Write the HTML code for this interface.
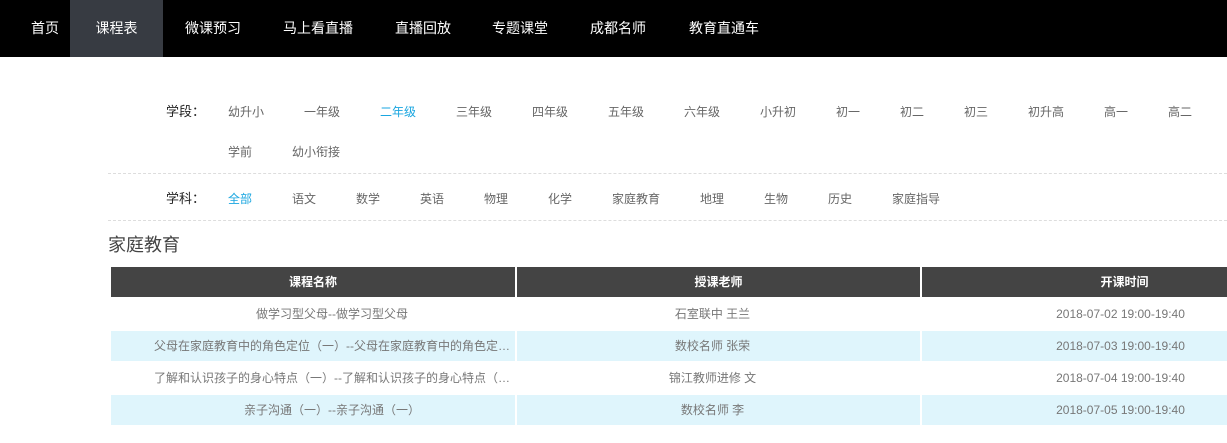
<!DOCTYPE html>
<html><head><meta charset="utf-8"><style>
*{margin:0;padding:0;box-sizing:border-box}
body{width:1227px;height:443px;overflow:hidden;background:#fff;font-family:"Liberation Sans","Noto Sans CJK SC",sans-serif;position:relative}
.nav{position:absolute;left:0;top:0;width:1227px;height:57px;background:#000}
.nav span{position:absolute;top:0;height:57px;line-height:57px;color:#fff;font-size:14px;white-space:nowrap}
.nav .act{background:#373b42;width:93px;left:70px;text-align:center}
.t{position:absolute;font-size:12px;color:#666;white-space:nowrap;line-height:16px}
.lab{color:#222;font-size:13px}
.blue{color:#1aa6e0}
.dash{position:absolute;left:108px;width:1119px;border-top:1px dashed #ddd}
.h{position:absolute;left:108px;top:231px;font-size:18px;color:#444}
.c{position:absolute;height:30px;line-height:30px;text-align:center;font-size:12px;color:#777;white-space:nowrap;overflow:hidden}
.n{padding-left:38px}
.d{padding-left:92px}
.hd{background:#444;color:#fff;font-weight:bold}
.bl{background:#dff5fc}
</style></head><body>
<div class="nav">
<span style="left:31px">首页</span>
<span class="act">课程表</span>
<span style="left:185px">微课预习</span>
<span style="left:283px">马上看直播</span>
<span style="left:395px">直播回放</span>
<span style="left:492px">专题课堂</span>
<span style="left:590px">成都名师</span>
<span style="left:689px">教育直通车</span>
</div>
<div class="t lab" style="left:166px;top:104px">学段：</div>
<div class="t" style="left:228px;top:104px">幼升小</div>
<div class="t" style="left:304px;top:104px">一年级</div>
<div class="t blue" style="left:380px;top:104px">二年级</div>
<div class="t" style="left:456px;top:104px">三年级</div>
<div class="t" style="left:532px;top:104px">四年级</div>
<div class="t" style="left:608px;top:104px">五年级</div>
<div class="t" style="left:684px;top:104px">六年级</div>
<div class="t" style="left:760px;top:104px">小升初</div>
<div class="t" style="left:836px;top:104px">初一</div>
<div class="t" style="left:900px;top:104px">初二</div>
<div class="t" style="left:964px;top:104px">初三</div>
<div class="t" style="left:1028px;top:104px">初升高</div>
<div class="t" style="left:1104px;top:104px">高一</div>
<div class="t" style="left:1168px;top:104px">高二</div>
<div class="t" style="left:228px;top:144px">学前</div>
<div class="t" style="left:292px;top:144px">幼小衔接</div>
<div class="dash" style="top:173px"></div>
<div class="t lab" style="left:166px;top:191px">学科：</div>
<div class="t blue" style="left:228px;top:191px">全部</div>
<div class="t" style="left:292px;top:191px">语文</div>
<div class="t" style="left:356px;top:191px">数学</div>
<div class="t" style="left:420px;top:191px">英语</div>
<div class="t" style="left:484px;top:191px">物理</div>
<div class="t" style="left:548px;top:191px">化学</div>
<div class="t" style="left:612px;top:191px">家庭教育</div>
<div class="t" style="left:700px;top:191px">地理</div>
<div class="t" style="left:764px;top:191px">生物</div>
<div class="t" style="left:828px;top:191px">历史</div>
<div class="t" style="left:892px;top:191px">家庭指导</div>
<div class="dash" style="top:220px"></div>
<div class="h">家庭教育</div>

<div class="c hd" style="left:111px;top:267px;width:404px">课程名称</div>
<div class="c hd" style="left:517px;top:267px;width:403px">授课老师</div>
<div class="c hd d" style="left:922px;top:267px;width:305px;padding-left:100px">开课时间</div>

<div class="c n" style="left:111px;top:299px;width:404px">做学习型父母--做学习型父母</div>
<div class="c" style="left:517px;top:299px;width:403px;padding-right:12px">石室联中 王兰</div>
<div class="c d" style="left:922px;top:299px;width:305px">2018-07-02 19:00-19:40</div>

<div class="c bl n" style="left:111px;top:331px;width:404px">父母在家庭教育中的角色定位（一）--父母在家庭教育中的角色定…</div>
<div class="c bl" style="left:517px;top:331px;width:403px;padding-right:12px">数校名师 张荣</div>
<div class="c bl d" style="left:922px;top:331px;width:305px">2018-07-03 19:00-19:40</div>

<div class="c n" style="left:111px;top:363px;width:404px">了解和认识孩子的身心特点（一）--了解和认识孩子的身心特点（…</div>
<div class="c" style="left:517px;top:363px;width:403px;padding-right:12px">锦江教师进修 文</div>
<div class="c d" style="left:922px;top:363px;width:305px">2018-07-04 19:00-19:40</div>

<div class="c bl n" style="left:111px;top:395px;width:404px">亲子沟通（一）--亲子沟通（一）</div>
<div class="c bl" style="left:517px;top:395px;width:403px;padding-right:12px">数校名师 李</div>
<div class="c bl d" style="left:922px;top:395px;width:305px">2018-07-05 19:00-19:40</div>
</body></html>
